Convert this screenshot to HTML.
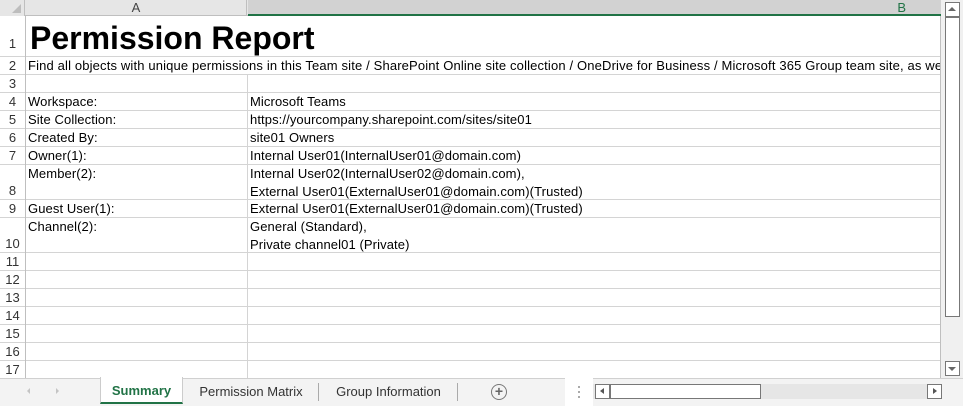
<!DOCTYPE html>
<html><head><meta charset="utf-8"><style>
body{margin:0;width:963px;height:406px;overflow:hidden;background:#fff;font-family:"Liberation Sans",Arial,sans-serif;position:relative}
div{position:absolute;box-sizing:border-box}
.hl{left:0;width:941px;height:1px;background:#d4d4d4}
.rn{left:0;width:25px;text-align:center;font-size:13px;color:#333}
.t{font-size:13px;color:#000;white-space:nowrap;line-height:18px;letter-spacing:0.1px}
</style></head><body>
<div style="left:0;top:0;width:941px;height:16px;background:#e6e6e6;border-bottom:1px solid #bfbfbf"></div>
<div style="left:0;top:0;width:25px;height:16px;background:#e6e6e6;border-right:1px solid #bfbfbf"></div>
<div style="left:12px;top:4px;width:0;height:0;border-left:9px solid transparent;border-bottom:9px solid #bdbdbd"></div>
<div style="left:26px;top:0;width:221px;height:16px;border-right:1px solid #bfbfbf;text-align:center;font-size:13px;line-height:16px;color:#444">A</div>
<div style="left:248px;top:0;width:693px;height:16px;background:#d2d2d2;border-bottom:2px solid #217346;text-align:right;padding-right:35px;font-size:13px;line-height:16px;color:#217346">B</div>
<div class="hl" style="top:56px"></div><div class="hl" style="top:74px"></div><div class="hl" style="top:92px"></div><div class="hl" style="top:110px"></div><div class="hl" style="top:128px"></div><div class="hl" style="top:146px"></div><div class="hl" style="top:164px"></div><div class="hl" style="top:199px"></div><div class="hl" style="top:217px"></div><div class="hl" style="top:252px"></div><div class="hl" style="top:270px"></div><div class="hl" style="top:288px"></div><div class="hl" style="top:306px"></div><div class="hl" style="top:324px"></div><div class="hl" style="top:342px"></div><div class="hl" style="top:360px"></div>
<div style="left:25px;top:16px;width:1px;height:362px;background:#bfbfbf"></div>
<div style="left:247px;top:74px;width:1px;height:304px;background:#d4d4d4"></div>
<div style="left:940px;top:16px;width:1px;height:362px;background:#bfbfbf"></div>
<div class="rn" style="top:36px">1</div><div class="rn" style="top:58px">2</div><div class="rn" style="top:76px">3</div><div class="rn" style="top:94px">4</div><div class="rn" style="top:112px">5</div><div class="rn" style="top:130px">6</div><div class="rn" style="top:148px">7</div><div class="rn" style="top:183px">8</div><div class="rn" style="top:201px">9</div><div class="rn" style="top:236px">10</div><div class="rn" style="top:254px">11</div><div class="rn" style="top:272px">12</div><div class="rn" style="top:290px">13</div><div class="rn" style="top:308px">14</div><div class="rn" style="top:326px">15</div><div class="rn" style="top:344px">16</div><div class="rn" style="top:362px">17</div>
<div style="left:30px;top:19px;font-size:32px;font-weight:bold;line-height:38px;white-space:nowrap">Permission Report</div>
<div class="t" style="left:28px;top:57px;width:912px;overflow:hidden;letter-spacing:0.15px">Find all objects with unique permissions in this Team site / SharePoint Online site collection / OneDrive for Business / Microsoft 365 Group team site, as well as</div>
<div class="t" style="left:28px;top:93px">Workspace:</div><div class="t" style="left:250px;top:93px">Microsoft Teams</div>
<div class="t" style="left:28px;top:111px">Site Collection:</div><div class="t" style="left:250px;top:111px">https://yourcompany.sharepoint.com/sites/site01</div>
<div class="t" style="left:28px;top:129px">Created By:</div><div class="t" style="left:250px;top:129px">site01 Owners</div>
<div class="t" style="left:28px;top:147px">Owner(1):</div><div class="t" style="left:250px;top:147px">Internal User01(InternalUser01@domain.com)</div>
<div class="t" style="left:28px;top:165px">Member(2):</div><div class="t" style="left:250px;top:165px">Internal User02(InternalUser02@domain.com),<br>External User01(ExternalUser01@domain.com)(Trusted)</div>
<div class="t" style="left:28px;top:200px">Guest User(1):</div><div class="t" style="left:250px;top:200px">External User01(ExternalUser01@domain.com)(Trusted)</div>
<div class="t" style="left:28px;top:218px">Channel(2):</div><div class="t" style="left:250px;top:218px">General (Standard),<br>Private channel01 (Private)</div>
<div style="left:941px;top:0;width:22px;height:378px;background:#f0f0f0"></div>
<div style="left:945px;top:2px;width:15px;height:15px;border:1px solid #777;background:#fff"></div>
<div style="left:948px;top:7px;width:0;height:0;border-left:4px solid transparent;border-right:4px solid transparent;border-bottom:4px solid #666"></div>
<div style="left:945px;top:17px;width:15px;height:300px;border:1px solid #777;background:#fff"></div>
<div style="left:945px;top:361px;width:15px;height:15px;border:1px solid #777;background:#fff"></div>
<div style="left:948px;top:367px;width:0;height:0;border-left:4px solid transparent;border-right:4px solid transparent;border-top:4px solid #666"></div>
<div style="left:0;top:378px;width:963px;height:28px;background:#f3f3f3;border-top:1px solid #d0d0d0"></div>
<div style="left:27px;top:388px;width:0;height:0;border-top:3px solid transparent;border-bottom:3px solid transparent;border-right:3px solid #c4c4c4"></div>
<div style="left:56px;top:388px;width:0;height:0;border-top:3px solid transparent;border-bottom:3px solid transparent;border-left:3px solid #c4c4c4"></div>
<div style="left:100px;top:377px;width:83px;height:27px;background:#fff;border-left:1px solid #ccc;border-right:1px solid #ccc;border-bottom:2px solid #217346;text-align:center;font-size:13px;font-weight:bold;color:#217346;line-height:28px">Summary</div>
<div style="left:184px;top:378px;width:134px;height:26px;text-align:center;font-size:13px;color:#333;line-height:27px">Permission Matrix</div>
<div style="left:318px;top:383px;width:1px;height:18px;background:#aaa"></div>
<div style="left:320px;top:378px;width:137px;height:26px;text-align:center;font-size:13px;color:#333;line-height:27px">Group Information</div>
<div style="left:457px;top:383px;width:1px;height:18px;background:#aaa"></div>
<div style="left:491px;top:384px;width:16px;height:16px;border:1.5px solid #777;border-radius:50%;text-align:center;font-size:14px;line-height:13px;color:#666;font-weight:bold">+</div>
<div style="left:565px;top:378px;width:28px;height:28px;background:#fff"></div>
<div style="left:578px;top:386px;width:2px;height:2px;background:#aaa"></div><div style="left:578px;top:391px;width:2px;height:2px;background:#aaa"></div><div style="left:578px;top:396px;width:2px;height:2px;background:#aaa"></div>
<div style="left:593px;top:384px;width:348px;height:15px;background:#e6e6e6"></div>
<div style="left:595px;top:384px;width:15px;height:15px;border:1px solid #777;background:#fff"></div>
<div style="left:600px;top:388px;width:0;height:0;border-top:3.5px solid transparent;border-bottom:3.5px solid transparent;border-right:4px solid #555"></div>
<div style="left:610px;top:384px;width:151px;height:15px;border:1px solid #777;background:#fff"></div>
<div style="left:927px;top:384px;width:15px;height:15px;border:1px solid #777;background:#fff"></div>
<div style="left:933px;top:388px;width:0;height:0;border-top:3.5px solid transparent;border-bottom:3.5px solid transparent;border-left:4px solid #555"></div>
</body></html>
